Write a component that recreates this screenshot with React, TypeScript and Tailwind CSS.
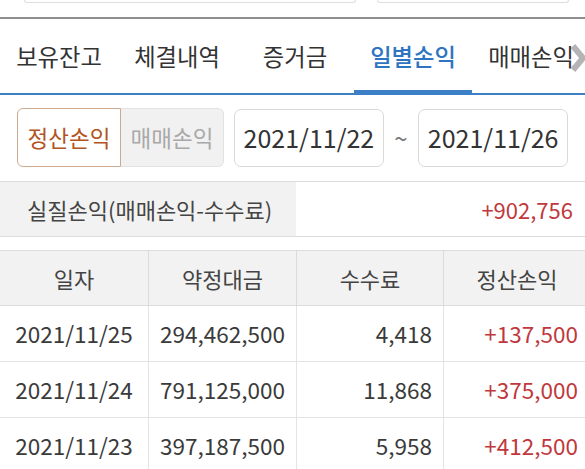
const tabs = ["보유잔고", "체결내역", "증거금", "일별손익", "매매손익"];

const rows = [
  { date: "2021/11/25", amount: "294,462,500", fee: "4,418", pnl: "+137,500" },
  { date: "2021/11/24", amount: "791,125,000", fee: "11,868", pnl: "+375,000" },
  { date: "2021/11/23", amount: "397,187,500", fee: "5,958", pnl: "+412,500" },
];

export default function App() {
  return (
    <div className="w-[585px] h-[469px] overflow-hidden bg-white font-['Noto_Sans_CJK_KR','Noto_Sans',sans-serif] text-[#3a3a3a]">
      {/* bottom of the inputs above */}
      <div className="flex h-[3px]">
        <div className="ml-[24px] w-[332px] border-x border-b border-[#dedede] rounded-b-[4px]" />
        <div className="ml-[21px] w-[192px] border-x border-b border-[#dedede] rounded-b-[4px]" />
      </div>
      <div className="mt-[14px] h-[2px] bg-[#8e8e8e]" />

      {/* tabs */}
      <div className="relative flex border-b-2 border-[#3d7fc6] overflow-hidden">
        {tabs.map((t, i) => (
          <div
            key={t}
            className={`w-[118px] shrink-0 h-[74px] flex items-center justify-center text-[23.3px] ${
              i === 3 ? "text-[#2f74c0] font-medium border-b-[3px] border-[#3d7fc6] pt-[3px]" : "text-[#333]"
            }`}
          >
            {t}
          </div>
        ))}
        <svg className="absolute right-[-2px] top-[24px]" width="18" height="30" viewBox="0 0 18 30">
          <path d="M4 3 L14 15 L4 27" fill="none" stroke="#b4b4b4" strokeWidth="6" strokeLinejoin="miter" />
        </svg>
      </div>

      {/* filters */}
      <div className="flex items-center px-[17px] mt-[13px]">
        <div className="flex w-[207px] h-[59px]">
          <div className="w-[104px] flex items-center justify-center bg-white border border-[#cfa98e] rounded-l-[6px] text-[22.5px] text-[#b2541f]">
            정산손익
          </div>
          <div className="w-[103px] flex items-center justify-center bg-[#f1f1f1] border border-l-0 border-[#e2e2e2] rounded-r-[6px] text-[22.5px] text-[#a9a9a9]">
            매매손익
          </div>
        </div>
        <div className="ml-[10px] w-[152px] h-[58px] flex items-center justify-center border border-[#d9d9d9] rounded-[7px] text-[25px] text-[#333]">
          2021/11/22
        </div>
        <div className="w-[35px] text-center text-[24px] text-[#777]">~</div>
        <div className="w-[152px] h-[58px] flex items-center justify-center border border-[#d9d9d9] rounded-[7px] text-[25px] text-[#333]">
          2021/11/26
        </div>
      </div>

      {/* summary */}
      <div className="mt-[14px] flex h-[56px] border-y border-[#dcdcdc]">
        <div className="w-[296px] bg-[#f2f2f2] flex items-center pl-[27px] text-[22px] text-[#444]">
          실질손익(매매손익-수수료)
        </div>
        <div className="flex-1 flex items-center justify-end pr-[12px] text-[22px] text-[#c0383d]">+902,756</div>
      </div>

      {/* table */}
      <div className="mt-[13px] w-[590px] border-t border-[#dcdcdc]">
        <div className="grid grid-cols-[148px_148px_147px_147px] h-[55px] bg-[#f2f2f2] border-b border-[#dcdcdc] text-[22px] text-[#444]">
          {["일자", "약정대금", "수수료", "정산손익"].map((h, i) => (
            <div key={h} className={`flex items-center justify-center ${i > 0 ? "border-l border-[#dcdcdc]" : ""}`}>
              {h}
            </div>
          ))}
        </div>
        {rows.map((r) => (
          <div
            key={r.date}
            className="grid grid-cols-[148px_148px_147px_147px] h-[56px] border-b border-[#e4e4e4] text-[22.5px] text-[#3a3a3a]"
          >
            <div className="flex items-center justify-center">{r.date}</div>
            <div className="flex items-center justify-center border-l border-[#e4e4e4]">{r.amount}</div>
            <div className="flex items-center justify-end pr-[11px] border-l border-[#e4e4e4]">{r.fee}</div>
            <div className="flex items-center justify-end pr-[12px] border-l border-[#e4e4e4] text-[#c0383d]">{r.pnl}</div>
          </div>
        ))}
      </div>
    </div>
  );
}
